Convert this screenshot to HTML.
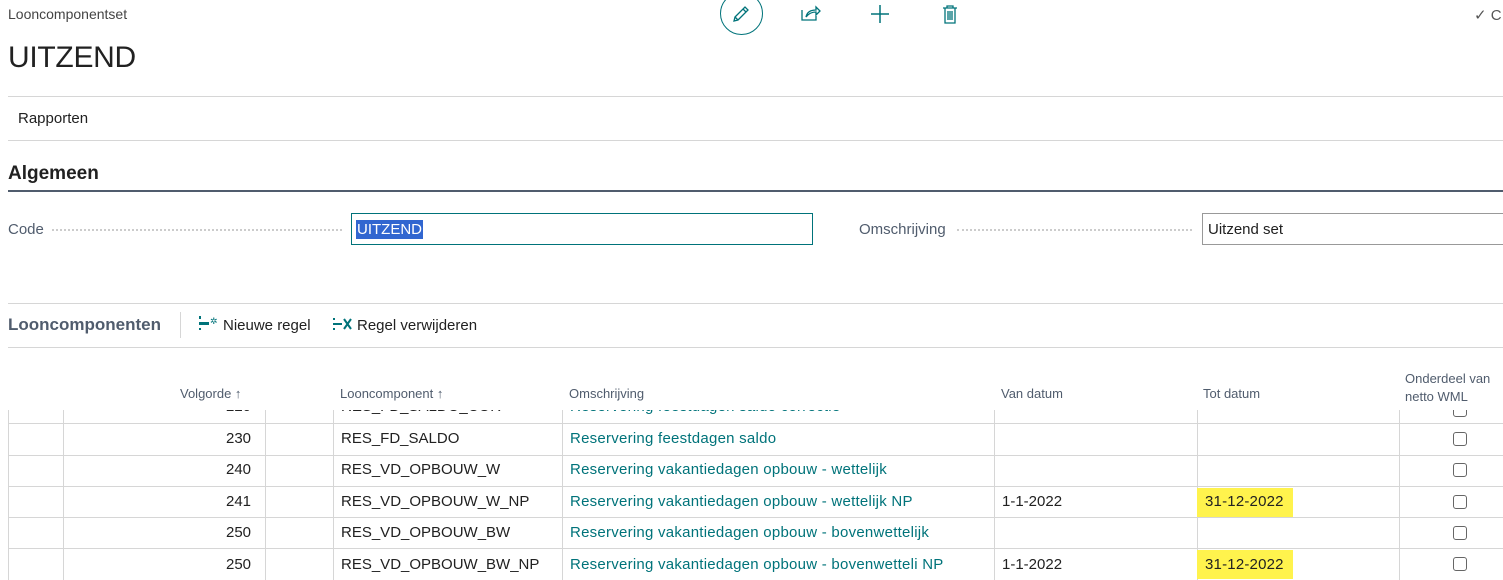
<!DOCTYPE html>
<html><head><meta charset="utf-8"><style>
*{margin:0;padding:0;box-sizing:border-box}
body{width:1503px;height:580px;overflow:hidden;background:#fff;font-family:"Segoe UI","Liberation Sans",sans-serif;color:#212121;position:relative;font-size:15px}
.a{position:absolute;white-space:nowrap}
.hl{position:absolute;height:1px;background:#d6d6d6}
.vl{position:absolute;width:1px;background:#d6d6d6}
.teal{color:#00737a;letter-spacing:0.25px}
.cb{position:absolute;width:14px;height:14px;border:1.3px solid #666;border-radius:3px;background:#fff}
.hdr{color:#505c6d;font-size:13px}
.yl{position:absolute;background:#fff34d;height:29px}
.c{letter-spacing:0}
</style></head><body>
<div class="a" style="left:8px;top:6px;font-size:14px;color:#444">Looncomponentset</div>
<div class="a" style="left:8px;top:41px;font-size:30px;color:#212121;font-weight:300;letter-spacing:-0.3px">UITZEND</div>
<div class="a" style="left:720px;top:-8px;width:43px;height:43px;border:1.3px solid #00737a;border-radius:50%"></div>
<svg class="a" style="left:731px;top:4px" width="20" height="20" viewBox="0 0 20 20" fill="none" stroke="#00737a" stroke-width="1.3"><path d="M3 17l1-4L14 3l3 3L7 16z M12 5l3 3 M4 13l3 3"/></svg>
<svg class="a" style="left:800px;top:4px" width="22" height="18" viewBox="0 0 22 18" fill="none" stroke="#00737a" stroke-width="1.3"><path d="M2 6v10h14v-4 M6 13c1-5 5-7 10-7V3l4 4-4 4V8c-4 0-7 1-10 5z"/></svg>
<svg class="a" style="left:870px;top:4px" width="20" height="20" fill="none" stroke="#00737a" stroke-width="1.5"><path d="M10 1v18M1 10h18"/></svg>
<svg class="a" style="left:942px;top:4px" width="16" height="20" fill="none" stroke="#00737a" stroke-width="1.3"><path d="M1 4h14M5 4V2h6v2M3 4v15h10V4M6 7v9M8 7v9M10 7v9"/></svg>
<div class="a" style="left:1474px;top:6px;color:#555">✓ C</div>
<div class="hl" style="left:8px;top:96px;width:1495px"></div>
<div class="a" style="left:18px;top:110px">Rapporten</div>
<div class="hl" style="left:8px;top:140px;width:1495px"></div>
<div class="a" style="left:8px;top:163px;font-size:19px;font-weight:600;color:#212121">Algemeen</div>
<div class="a" style="left:8px;top:190px;width:1495px;height:2px;background:#505c6d"></div>
<div class="a" style="left:8px;top:221px;color:#505c6d">Code</div>
<div class="a" style="left:52px;top:229px;width:290px;border-top:2px dotted #ccc"></div>
<div class="a" style="left:351px;top:213px;width:462px;height:32px;border:1px solid #00737a"></div>
<div class="a" style="left:356px;top:220px;background:#3166d0;color:#fff;padding:0 1px;line-height:19px">UITZEND</div>
<div class="a" style="left:859px;top:221px;color:#505c6d">Omschrijving</div>
<div class="a" style="left:957px;top:229px;width:235px;border-top:2px dotted #ccc"></div>
<div class="a" style="left:1202px;top:213px;width:310px;height:32px;border:1px solid #999"></div>
<div class="a" style="left:1208px;top:221px">Uitzend set</div>
<div class="hl" style="left:8px;top:303px;width:1495px"></div>
<div class="a" style="left:8px;top:315px;font-size:17px;font-weight:600;color:#505c6d">Looncomponenten</div>
<div class="vl" style="left:180px;top:312px;height:26px"></div>
<svg class="a" style="left:199px;top:316px" width="18" height="14" fill="#00737a"><rect x="0" y="6" width="10" height="3"/><rect x="0" y="0" width="2" height="3"/><rect x="0" y="12" width="2" height="2"/><text x="11" y="8" font-size="9" fill="#00737a">✲</text></svg>
<div class="a" style="left:223px;top:317px">Nieuwe regel</div>
<svg class="a" style="left:333px;top:317px" width="20" height="14" fill="none" stroke="#00737a" stroke-width="2"><path d="M0 7h9M11 2l7 10M18 2l-7 10M1 1v2M1 11v2"/></svg>
<div class="a" style="left:357px;top:317px">Regel verwijderen</div>
<div class="hl" style="left:8px;top:347px;width:1495px"></div>
<div class="a hdr" style="left:180px;top:386px">Volgorde ↑</div>
<div class="a hdr" style="left:340px;top:386px">Looncomponent ↑</div>
<div class="a hdr" style="left:569px;top:386px">Omschrijving</div>
<div class="a hdr" style="left:1001px;top:386px">Van datum</div>
<div class="a hdr" style="left:1203px;top:386px">Tot datum</div>
<div class="a hdr" style="left:1405px;top:370px;line-height:18px">Onderdeel van<br>netto WML</div>
<div class="vl" style="left:8px;top:410px;height:170px"></div>
<div class="vl" style="left:63px;top:410px;height:170px"></div>
<div class="vl" style="left:265px;top:410px;height:170px"></div>
<div class="vl" style="left:333px;top:410px;height:170px"></div>
<div class="vl" style="left:562px;top:410px;height:170px"></div>
<div class="vl" style="left:994px;top:410px;height:170px"></div>
<div class="vl" style="left:1197px;top:410px;height:170px"></div>
<div class="vl" style="left:1399px;top:410px;height:170px"></div>
<div style="position:absolute;left:0;top:410px;width:1503px;height:13px;overflow:hidden">
<div class="a" style="left:226px;top:-12px">220</div><div class="a c" style="left:341px;top:-12px">RES_FD_SALDO_COR</div><div class="a teal" style="left:570px;top:-12px">Reservering feestdagen saldo correctie</div><div class="cb" style="left:1453px;top:-7px"></div></div>
<div class="hl" style="left:8px;top:423px;width:1495px"></div>
<div class="hl" style="left:8px;top:455px;width:1495px"></div>
<div class="hl" style="left:8px;top:486px;width:1495px"></div>
<div class="hl" style="left:8px;top:517px;width:1495px"></div>
<div class="hl" style="left:8px;top:548px;width:1495px"></div>
<div class="yl" style="left:1197px;top:488px;width:96px"></div>
<div class="yl" style="left:1197px;top:550px;width:96px"></div>
<div class="a" style="left:226px;top:430px">230</div><div class="a c" style="left:341px;top:430px">RES_FD_SALDO</div><div class="a teal" style="left:570px;top:430px">Reservering feestdagen saldo</div><div class="cb" style="left:1453px;top:432px"></div>
<div class="a" style="left:226px;top:461px">240</div><div class="a c" style="left:341px;top:461px">RES_VD_OPBOUW_W</div><div class="a teal" style="left:570px;top:461px">Reservering vakantiedagen opbouw - wettelijk</div><div class="cb" style="left:1453px;top:463px"></div>
<div class="a" style="left:226px;top:493px">241</div><div class="a c" style="left:341px;top:493px">RES_VD_OPBOUW_W_NP</div><div class="a teal" style="left:570px;top:493px">Reservering vakantiedagen opbouw - wettelijk NP</div><div class="a c" style="left:1002px;top:493px">1-1-2022</div><div class="a" style="left:1205px;top:493px;letter-spacing:0.2px">31-12-2022</div><div class="cb" style="left:1453px;top:495px"></div>
<div class="a" style="left:226px;top:524px">250</div><div class="a c" style="left:341px;top:524px">RES_VD_OPBOUW_BW</div><div class="a teal" style="left:570px;top:524px">Reservering vakantiedagen opbouw - bovenwettelijk</div><div class="cb" style="left:1453px;top:526px"></div>
<div class="a" style="left:226px;top:556px">250</div><div class="a c" style="left:341px;top:556px">RES_VD_OPBOUW_BW_NP</div><div class="a teal" style="left:570px;top:556px">Reservering vakantiedagen opbouw - bovenwetteli NP</div><div class="a c" style="left:1002px;top:556px">1-1-2022</div><div class="a" style="left:1205px;top:556px;letter-spacing:0.2px">31-12-2022</div><div class="cb" style="left:1453px;top:557px"></div>
</body></html>
